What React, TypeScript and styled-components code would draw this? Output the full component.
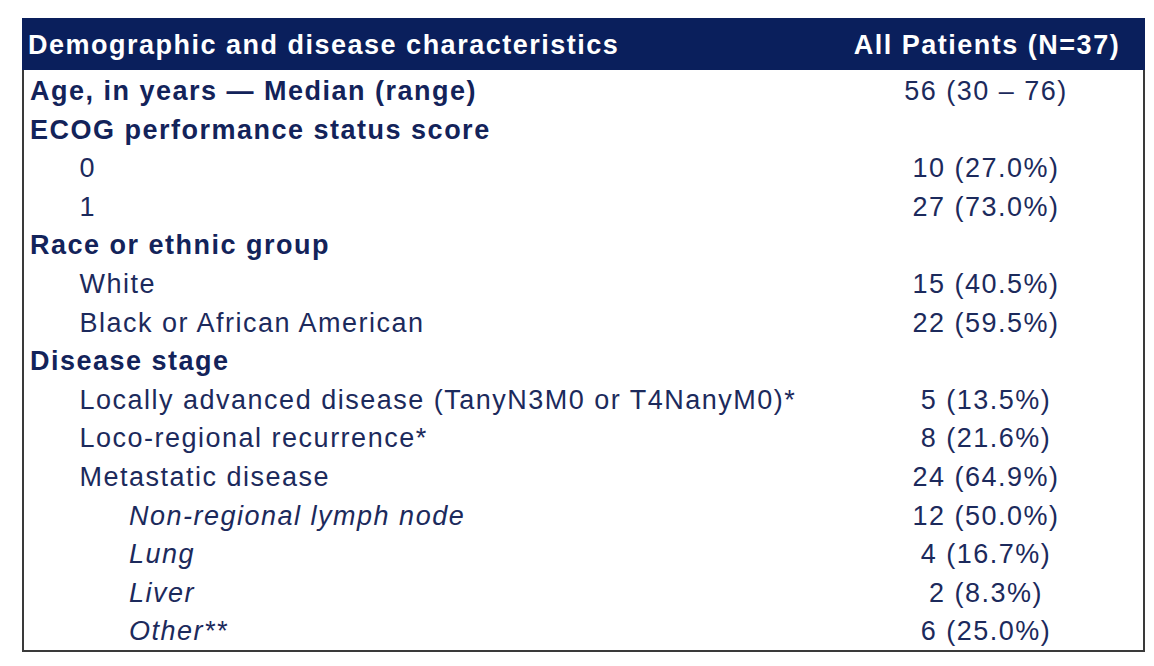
import React from "react";
import styled, { createGlobalStyle } from "styled-components";

const Global = createGlobalStyle`
  html, body { margin: 0; padding: 0; background: #ffffff; }
  body { font-family: "Liberation Sans", Arial, sans-serif; }
`;

const Page = styled.div`
  width: 1154px;
  height: 666px;
  padding: 18px 0 0 22px;
  box-sizing: border-box;
  background: #fff;
`;

const Table = styled.div`
  width: 1123px;
  box-sizing: border-box;
  display: grid;
  grid-template-columns: 1fr 314px;
  border-left: 2px solid #3a3a3a;
  border-right: 2px solid #3a3a3a;
  border-bottom: 2px solid #3a3a3a;
`;

const HeadCell = styled.div<{ $center?: boolean }>`
  background: #0a1f5c;
  height: 52px;
  display: flex;
  align-items: center;
  justify-content: ${(p) => (p.$center ? "center" : "flex-start")};
  padding-left: ${(p) => (p.$center ? "0" : "6px")};
  color: #ffffff;
  font-weight: 700;
  font-size: 27px;
  letter-spacing: 1.5px;
  margin-left: ${(p) => (p.$center ? "0" : "-2px")};
  margin-right: ${(p) => (p.$center ? "-2px" : "0")};
  padding-top: 2px;
  box-sizing: border-box;
  white-space: nowrap;
`;

const Body = styled.div`
  grid-column: 1 / -1;
  display: grid;
  grid-template-columns: 1fr 314px;
  padding-top: 1px;
`;

const Cell = styled.div`
  box-sizing: border-box;
  height: 38.6px;
  padding-top: 3px;
  line-height: 35.6px;
  font-size: 27px;
  letter-spacing: 1.5px;
  white-space: nowrap;
  color: #1c2a5c;
`;

const Label = styled(Cell)<{ $level: number; $bold?: boolean; $italic?: boolean }>`
  padding-left: ${(p) => 6 + p.$level * 49.5}px;
  font-weight: ${(p) => (p.$bold ? 700 : 400)};
  font-style: ${(p) => (p.$italic ? "italic" : "normal")};
  color: ${(p) => (p.$bold ? "#13235a" : "#1c2a5c")};
`;

const Value = styled(Cell)`
  text-align: center;
`;

type Row = { label: string; value?: string; level: number; bold?: boolean; italic?: boolean };

const rows: Row[] = [
  { label: "Age, in years — Median (range)", value: "56 (30 – 76)", level: 0, bold: true },
  { label: "ECOG performance status score", level: 0, bold: true },
  { label: "0", value: "10 (27.0%)", level: 1 },
  { label: "1", value: "27 (73.0%)", level: 1 },
  { label: "Race or ethnic group", level: 0, bold: true },
  { label: "White", value: "15 (40.5%)", level: 1 },
  { label: "Black or African American", value: "22 (59.5%)", level: 1 },
  { label: "Disease stage", level: 0, bold: true },
  { label: "Locally advanced disease (TanyN3M0 or T4NanyM0)*", value: "5 (13.5%)", level: 1 },
  { label: "Loco-regional recurrence*", value: "8 (21.6%)", level: 1 },
  { label: "Metastatic disease", value: "24 (64.9%)", level: 1 },
  { label: "Non-regional lymph node", value: "12 (50.0%)", level: 2, italic: true },
  { label: "Lung", value: "4 (16.7%)", level: 2, italic: true },
  { label: "Liver", value: "2 (8.3%)", level: 2, italic: true },
  { label: "Other**", value: "6 (25.0%)", level: 2, italic: true },
];

export default function App() {
  return (
    <>
      <Global />
      <Page>
        <Table>
          <HeadCell>Demographic and disease characteristics</HeadCell>
          <HeadCell $center>All Patients (N=37)</HeadCell>
          <Body>
            {rows.map((r, i) => (
              <React.Fragment key={i}>
                <Label $level={r.level} $bold={r.bold} $italic={r.italic}>
                  {r.label}
                </Label>
                <Value>{r.value ?? ""}</Value>
              </React.Fragment>
            ))}
          </Body>
        </Table>
      </Page>
    </>
  );
}
